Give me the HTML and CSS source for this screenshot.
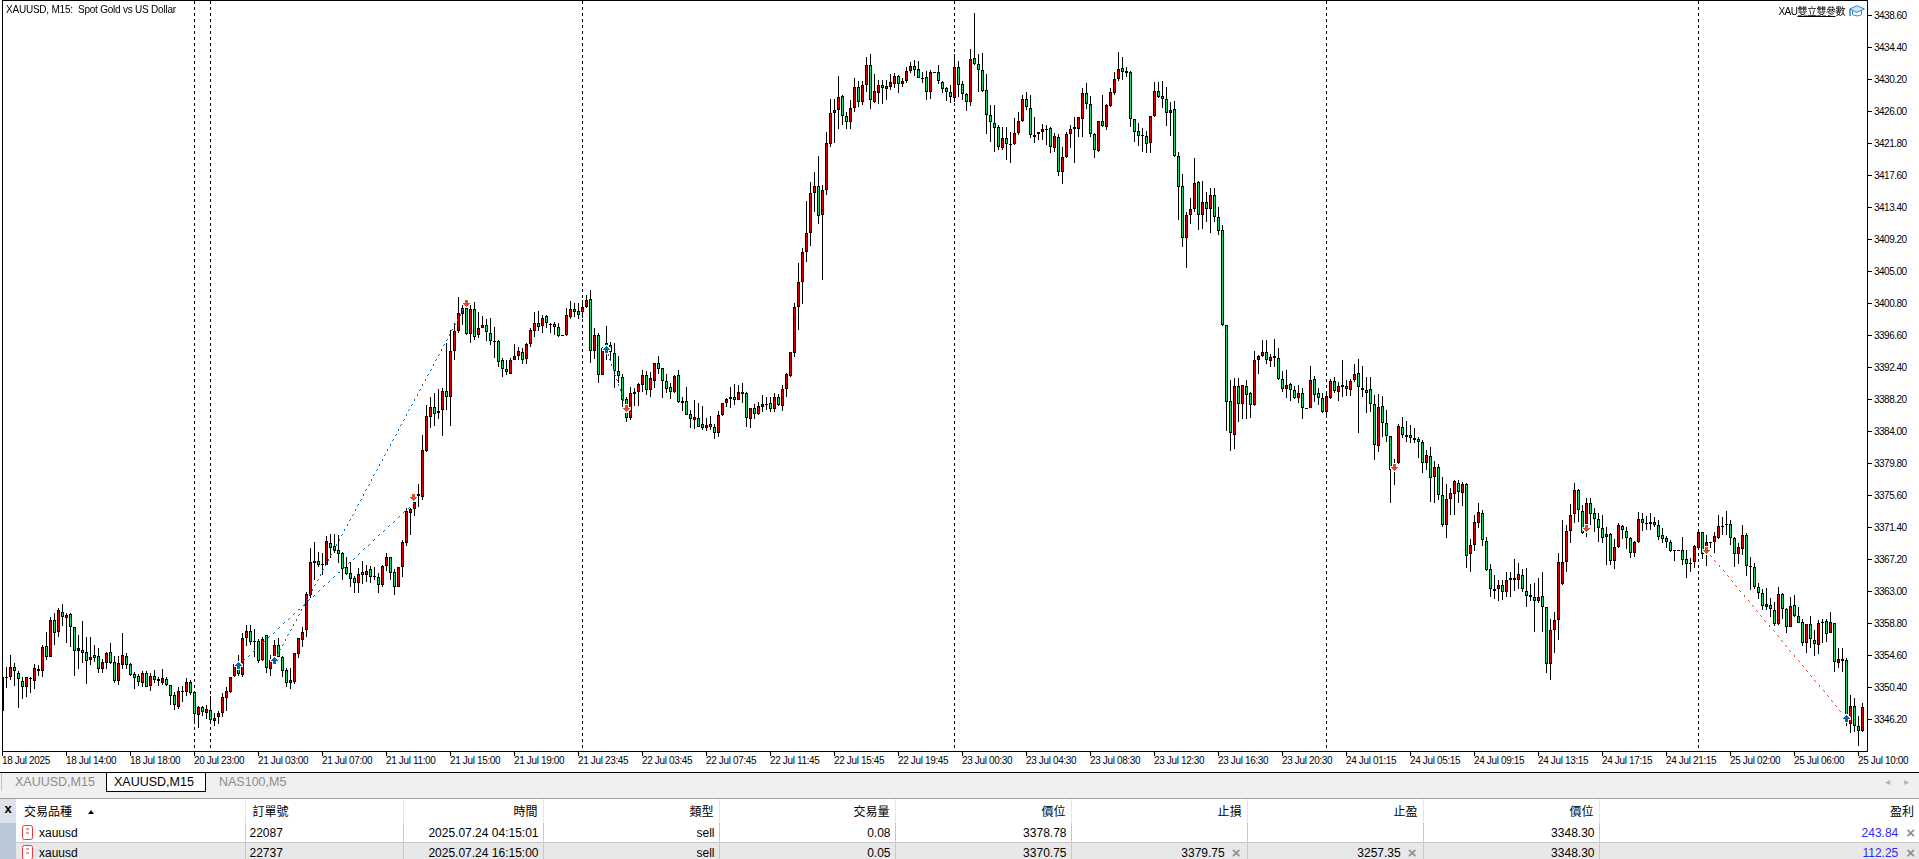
FILE: index.html
```html
<!DOCTYPE html>
<html lang="zh-Hant">
<head>
    <meta charset="UTF-8">
    <title>XAUUSD,M15</title>
    <link rel="stylesheet" href="styles.css">
    <script src="chart.js"></script>
</head>
<body>
<div class="terminal">

    <div class="chart-row">
        <div class="plot">
            <canvas id="idChart" width="1864" height="750"></canvas>
            <div class="chart-title">XAUUSD, M15:  Spot Gold vs US Dollar</div>
            <div class="chart-badge">
                <span class="badge-text">XAU<u>雙立雙參</u>數</span>
                <svg class="cap" width="16" height="13" viewBox="0 0 16 13">
                    <path d="M8 .7 15.4 4 8 7.3 .8 4Z" fill="#cfe6f8" stroke="#1e88d8"/>
                    <path d="M3.5 6v3.6c2.5 1.700 6.500 1.700 9 0V6" fill="none" stroke="#1e88d8"/>
                    <path d="M1 4v7" fill="none" stroke="#1e88d8" stroke-width="1.500"/>
                </svg>
            </div>
        </div>
        <div class="price-axis" id="idPrices"></div>
    </div>
    <div class="time-axis" id="idTimes"></div>

    <div class="tabs">
        <div class="tab">XAUUSD,M15</div>
        <div class="tab active">XAUUSD,M15</div>
        <div class="tab">NAS100,M5</div>
        <div class="tab-nav"><span>&#9666;</span><span>&#9656;</span></div>
    </div>

    <div class="toolbox">
        <div class="strip"><div class="strip-close">x</div></div>
        <table class="grid">
            <colgroup>
                <col class="c-symbol"><col class="c-order"><col class="c-time"><col class="c-wide"><col class="c-wide">
                <col class="c-wide"><col class="c-wide"><col class="c-wide"><col class="c-wide"><col class="c-profit">
            </colgroup>
            <tr>
                <th class="left first">交易品種<i class="sort"></i></th>
                <th class="left">訂單號</th>
                <th>時間</th>
                <th>類型</th>
                <th>交易量</th>
                <th>價位</th>
                <th>止損</th>
                <th>止盈</th>
                <th>價位</th>
                <th>盈利</th>
            </tr>
            <tr>
                <td class="left first">
                    <svg class="pos-icon" width="11" height="15" viewBox="0 0 11 15">
                        <rect x=".5" y=".5" width="10" height="14" rx="2" fill="#fff" stroke="#e5383b"/>
                        <path d="M4 4h3M4 8h3" stroke="#e5383b"/>
                    </svg>xauusd
                </td>
                <td class="left">22087</td>
                <td>2025.07.24 04:15:01</td>
                <td>sell</td>
                <td>0.08</td>
                <td>3378.78</td>
                <td></td>
                <td></td>
                <td>3348.30</td>
                <td class="profit"><span>243.84</span><b>×</b></td>
            </tr>
            <tr class="alt">
                <td class="left first">
                    <svg class="pos-icon" width="11" height="15" viewBox="0 0 11 15">
                        <rect x=".5" y=".5" width="10" height="14" rx="2" fill="#fff" stroke="#e5383b"/>
                        <path d="M4 4h3M4 8h3" stroke="#e5383b"/>
                    </svg>xauusd
                </td>
                <td class="left">22737</td>
                <td>2025.07.24 16:15:00</td>
                <td>sell</td>
                <td>0.05</td>
                <td>3370.75</td>
                <td class="close">3379.75<b>×</b></td>
                <td class="close">3257.35<b>×</b></td>
                <td>3348.30</td>
                <td class="profit"><span>112.25</span><b>×</b></td>
            </tr>
        </table>
    </div>

</div>
</body>
</html>
```
FILE: styles.css
```css
html, body
{
    margin: 0;
    height: 100%;
    overflow: hidden;
    background: #fff;
}
.terminal
{
    display: flex;
    flex-direction: column;
    height: 859px;
    overflow: hidden;
    font-family: "Liberation Sans", "Noto Sans CJK TC", sans-serif;
    color: #000;
}

/* chart */
.chart-row
{
    display: flex;
    height: 752px;
    flex: none;
}
.plot
{
    position: relative;
    margin-left: 2px;
    width: 1864px;
    height: 750px;
    border: 1px solid #000;
    flex: none;
}
.plot canvas
{
    display: block;
}
.chart-title
{
    position: absolute;
    left: 3px;
    top: 2px;
    font-size: 10px;
    letter-spacing: -0.220px;
    line-height: 13px;
    white-space: pre;
}
.chart-badge
{
    position: absolute;
    right: 2px;
    top: 4px;
    display: flex;
    align-items: center;
    gap: 4px;
}
.badge-text
{
    font-size: 10px;
    line-height: 13px;
    letter-spacing: -0.500px;
    white-space: nowrap;
}
.cap
{
    display: block;
}

.price-axis
{
    flex: 1;
    margin-top: -1px;
    font-size: 10px;
    letter-spacing: -0.500px;
}
.price
{
    display: flex;
    align-items: center;
    height: 32px;
    gap: 2px;
}
.price::before
{
    content: "";
    width: 4px;
    height: 1px;
    background: #000;
}

.time-axis
{
    display: flex;
    height: 20px;
    flex: none;
    padding-left: 2px;
    font-size: 10px;
    letter-spacing: -0.350px;
    overflow: hidden;
}
.time
{
    position: relative;
    width: 64px;
    flex: none;
    padding-top: 3px;
    line-height: 12px;
    white-space: nowrap;
}
.time::before
{
    content: "";
    position: absolute;
    left: 0;
    top: 0;
    width: 1px;
    height: 4px;
    background: #000;
}

/* tabs */
.tabs
{
    display: flex;
    height: 25px;
    flex: none;
    border-top: 1px solid #000;
    border-bottom: 1px solid #a0a0a0;
    background: #f0f0f0;
    font-size: 12.500px;
    color: #8c8c8c;
}
.tab
{
    height: 18px;
    padding: 0 13px;
    line-height: 18px;
    white-space: nowrap;
}
.tab:first-child
{
    margin-left: 1px;
    width: 78px;
    border-left: 1px solid #c4c4c4;
}
.tab.active
{
    width: 91px;
    padding: 0 0 0 7px;
    background: #fff;
    color: #000;
    border: 1px solid #000;
    border-top: none;
}
.tab-nav
{
    display: flex;
    gap: 14px;
    margin-left: auto;
    margin-right: 10px;
    font-size: 10px;
    line-height: 18px;
    color: #b4b4b4;
}

/* positions */
.toolbox
{
    display: flex;
    flex: none;
}
.strip
{
    width: 16px;
    flex: none;
    height: 61px;
    background: #b9c9da;
}
.strip-close
{
    height: 24px;
    background: #dce2e9;
    font-size: 13px;
    font-weight: bold;
    line-height: 20px;
    text-align: center;
}
.grid
{
    table-layout: fixed;
    border-collapse: collapse;
    width: 1903px;
    font-size: 12px;
}
.c-symbol { width: 229px; }
.c-order { width: 158px; }
.c-time { width: 140px; }
.c-wide { width: 176px; }
.c-profit { width: 320px; }

.grid th
{
    height: 22px;
    padding: 0 5px 2px 0;
    border-right: 1px solid #e6e6e6;
    font-weight: normal;
    text-align: right;
    white-space: nowrap;
}
.grid td
{
    height: 19px;
    padding: 0 4px 0 0;
    border-right: 1px solid #c8c8c8;
    border-bottom: 1px solid #c8c8c8;
    text-align: right;
    white-space: nowrap;
    overflow: hidden;
}
.grid th.left { text-align: left; padding-left: 7px; }
.grid td.left { text-align: left; padding-left: 4px; }
.grid th.first { padding-left: 8px; }
.grid td.first { padding-left: 6px; }
.grid .alt td
{
    background: #e8e8e8;
}
.grid th:last-child, .grid td:last-child
{
    border-right: none;
}
.sort
{
    display: inline-block;
    margin-left: 16px;
    vertical-align: 2px;
    border-left: 3px solid transparent;
    border-right: 3px solid transparent;
    border-bottom: 4px solid #000;
}
.pos-icon
{
    margin-right: 6px;
    vertical-align: -3px;
}
.grid b
{
    color: #8f8f8f;
    font-size: 15px;
    line-height: 12px;
    vertical-align: -1px;
}
.close b
{
    margin-left: 7px;
    margin-right: 2px;
}
.profit span
{
    color: #2a2aff;
}
.profit b
{
    margin-left: 8px;
}
```
FILE: chart.js
```js
// candles read off the chart: wick top, body top, body bottom, wick bottom, colour
// values are 3x pixels from the row's Y0
var CandleRows=
[
    {Y0:580,Data:"292 292 392 392 k,260 292 293 325 k,225 262 290 300 r,250 262 274 318 g,272 280 298 384 g,292 302 320 356 g,292 292 320 350 r,290 294 298 338 k,252 265 302 328 r,255 268 272 288 k,195 202 272 290 r,155 198 230 240 g,112 120 230 232 r,100 120 158 195 g,85 90 155 172 r,72 96 110 138 g,100 105 113 188 r,98 102 142 200 g,140 142 212 288 g,165 205 212 266 r,122 210 218 250 g,170 217 242 312 g,172 232 240 256 r,195 226 234 245 g,205 228 266 280 g,236 246 266 280 r,215 220 250 268 r,188 217 248 252 g,228 247 302 308 g,228 250 302 316 r,158 226 254 268 r,220 229 254 268 g,248 252 284 288 g,275 283 293 326 g,282 289 305 318 g,272 280 308 320 r,272 280 320 322 g,278 289 318 332 r,270 289 300 310 g,290 296 304 318 k,268 295 308 315 r,290 297 314 318 g,316 316 347 376 g,335 346 374 390 g,320 333 380 386 r,318 333 334 365 k,295 307 337 348 r,300 307 338 345 g,337 337 403 428 g,378 380 406 443 r,378 382 395 408 g,375 388 398 418 r,348 391 421 430 g,400 415 423 438 r,392 400 412 432 r,340 352 400 410 r,320 334 355 392 r,290 290 335 338 r,252 253 288 290 r,225 265 282 288 g,160 175 284 290 r,135 154 174 198 r,135 154 185 196 g,148 183 186 232 k,178 182 242 250 g,170 176 240 242 r,165 166 263 280 g,225 240 266 288 r,180 196 230 248 r,175 196 230 232 g,228 232 274 290 g,264 270 308 320 g,265 300 308 326 r,220 220 305 312 r,175 175 222 234 r,140 157 180 200 r"},
    {Y0:290,Data:"905 913 1020 1040 r,775 817 915 925 r,757 814 818 870 k,785 814 824 830 g,790 822 824 855 k,738 754 824 826 r,732 760 773 805 g,732 768 782 790 g,735 781 791 818 g,785 790 836 870 g,800 832 851 855 g,817 850 868 890 g,858 865 878 910 g,835 851 878 910 r,813 847 856 882 g,825 842 856 875 r,827 838 860 878 g,830 859 861 870 k,850 862 886 908 g,826 829 884 892 r,790 802 829 842 r,802 802 848 870 g,838 846 892 915 g,832 832 892 892 r,750 756 832 860 r,655 664 758 768 r,655 657 668 735 r,633 635 656 678 r,582 613 618 650 k,435 481 620 630 r,346 379 482 485 r,322 352 380 413 r,310 352 371 408 g,297 364 370 388 r,295 304 361 438 r,160 304 320 360 g,120 184 322 408 r,98 122 184 210 r,22 70 122 130 r,40 55 72 105 r,38 55 132 135 g,40 58 132 158 r,37 58 142 150 g,67 113 136 145 r,78 106 113 115 r,87 106 127 152 g"},
    {Y0:280,Data:"115 158 182 195 g,140 182 183 234 k,180 184 245 260 g,235 241 266 290 g,240 268 275 285 g,235 241 281 282 r,193 229 241 240 r,200 214 229 240 r,205 217 240 252 g,188 193 236 252 r,145 151 193 200 r,95 130 152 170 r,93 130 140 153 g,105 114 137 158 r,105 109 130 145 g,128 131 132 158 k,125 133 140 165 g,130 142 167 172 g,166 166 167 167 k,85 106 166 168 r,62 88 110 118 r,68 88 97 112 g,68 94 104 118 g,60 82 97 115 r,45 60 82 84 r,30 58 214 248 g,145 166 214 238 r,158 166 284 310 g,200 205 284 285 r,138 190 215 240 g,185 194 216 240 g,188 218 272 325 g,228 272 288 310 g,282 290 360 385 g,350 358 413 425 g,322 340 413 420 r,325 337 341 378 k,308 312 335 378 r,270 285 314 335 r,273 286 329 345 g,275 295 329 350 r,250 250 302 325 r,228 250 266 282 g,265 265 304 353 g,283 304 326 340 g,310 322 335 358 g,285 289 335 338 r,270 286 365 368 g,350 364 368 392 k,322 364 405 405 g,390 403 418 445 g,360 412 419 448 r,370 415 440 442 g,378 433 445 450 g,415 435 443 452 r,408 433 440 450 g,432 442 458 478 g,392 405 458 470 r,370 370 406 408 r,353 358 370 380 r,322 352 358 385 r,312 352 359 375 g,316 337 359 360 r,310 337 341 370 k,335 340 415 440 g,385 385 418 445 r,372 385 403 418 g,365 379 403 405 r,345 373 380 395 r,350 371 372 390 k,350 370 387 395 g,340 352 388 395 r,342 352 376 378 g,315 328 378 393 r,278 283 328 352 r,215 217 287 292 r,70 82 218 230 r"},
    {Y0:10,Data:"759 816 891 960 r,714 726 816 882 r,572 670 727 757 r,517 550 670 707 r,487 529 550 605 r,438 529 618 643 g,525 541 616 810 r,367 400 541 555 r,267 310 403 410 r,267 301 310 398 r,198 262 301 356 r,255 259 319 345 g,305 319 337 356 g,270 295 337 358 r,203 232 295 305 r,213 232 277 290 g,213 226 275 285 r,142 166 226 245 r,132 166 271 298 g,193 244 275 280 r,210 226 248 282 r,210 226 233 282 g,210 229 236 270 r,193 217 230 240 r,190 199 221 235 r,194 199 223 250 g,205 214 223 232 r,170 184 214 218 r,157 169 184 190 r,150 169 179 198 g,152 178 205 205 g,185 203 204 220 k,183 202 245 270 g,180 187 245 266 r,187 187 188 188 k,165 187 214 222 g,212 217 236 250 g,230 233 247 272 g,225 247 262 278 g,132 172 263 275 r,153 172 226 262 g,214 223 253 270 g,250 253 275 302 g,118 148 275 288 r,10 145 163 165 g,133 163 181 245 g,130 181 242 246 g,193 241 314 372 g,285 316 337 395 g,285 340 355 425 g,345 352 412 420 g,350 385 415 420 r,352 385 403 450 g,365 403 404 460 k,325 370 403 404 r,305 334 370 375 r,255 267 334 335 r,247 267 292 300 g,255 295 376 385 g,322 376 380 398 k,365 366 373 390 r,342 358 367 390 r,345 356 357 405 k,350 354 412 428 g,370 379 413 425 r,372 382 485 497 g,410 442 485 523 r,367 373 442 443 r,345 358 373 415 r,320 351 356 458 k,320 322 356 380 r,235 250 328 380 r,220 250 282 298 g,258 283 373 380 g,370 373 421 445 g,333 333 422 425 r,255 334 347 350 g,283 286 350 360 r,235 247 287 290 r,187 208 250 256 r,126 176 208 212 r,140 175 187 210 g,170 183 188 200 k,183 186 328 352 g,328 328 365 395 g,340 364 379 408 g,355 376 377 425 k,362 379 401 430 g,318 319 398 430 r,215 244 317 322 r,215 244 260 265 g,212 259 266 295 g,230 267 310 347 g,275 301 310 378 r,273 298 439 440 g,427 439 532 630 g,492 529 685 710 g,605 615 685 773 r,565 598 616 642 r,445 520 598 605 r,513 516 616 660 g,513 577 616 657 r,545 577 598 635 g,535 556 598 668 r,535 556 620 635 g,590 620 664 675 g"},
    {Y0:40,Data:"555 571 854 858 g,856 856 1087 1172 g,1020 1084 1180 1232 g,1015 1039 1184 1228 r,1015 1039 1093 1145 g,1035 1036 1093 1137 r,1020 1039 1066 1137 g,1055 1060 1096 1133 g,933 961 1094 1098 r,945 949 961 1002 r,900 937 947 950 r,900 937 961 972 g,942 952 964 980 r,897 949 955 982 g,925 955 1018 1020 g,993 1018 1048 1055 g,990 1036 1048 1075 r,1028 1033 1051 1082 g,1038 1051 1075 1076 g,1035 1060 1075 1090 r,1045 1060 1105 1136 g,1105 1105 1106 1106 k,978 1021 1105 1105 r,1008 1018 1066 1085 g,1045 1060 1075 1095 g,1060 1075 1115 1118 g,1062 1069 1115 1130 r,1018 1024 1073 1078 r,1012 1024 1054 1060 g,1025 1039 1055 1082 r,960 1036 1040 1070 k,1020 1039 1048 1068 g,1018 1024 1051 1068 r,972 1003 1021 1025 r,957 1000 1042 1178 g,978 1045 1051 1070 g,1012 1051 1058 1118 g,1012 1048 1093 1115 g,1065 1093 1214 1260 g,1062 1102 1217 1235 r,1068 1099 1150 1192 g,1110 1150 1187 1205 g,1187 1187 1291 1389 g,1258 1270 1292 1335 k,1152 1159 1268 1272 r,1132 1162 1184 1195 g,1143 1186 1191 1205 k,1155 1186 1193 1208 g,1163 1195 1199 1210 k,1190 1198 1207 1253 g,1200 1207 1268 1298 g,1230 1246 1268 1290 r"},
    {Y0:460,Data:"-40 -12 55 125 g,3 20 52 130 r,12 22 106 120 g,50 106 195 200 g,72 118 196 233 r,85 100 118 165 r,60 64 102 165 r,60 68 95 130 g,65 73 100 138 r,68 73 287 325 g,238 256 283 335 r,165 187 256 272 r,130 157 190 205 r,150 160 241 258 g,232 244 329 332 g,312 328 388 410 g,345 388 394 418 r,360 376 388 422 r,360 376 397 420 g,337 361 397 412 r,335 355 361 410 r,297 355 361 392 g,310 343 361 388 r,328 344 386 395 g,323 392 409 440 g,372 406 412 422 g,370 412 424 515 g,355 410 424 430 r,336 409 442 515 g,440 442 613 638 g,477 511 613 660 r,457 481 511 578 r,278 307 481 540 r,180 307 373 375 r,195 214 307 335 r,133 166 214 248 r,70 91 163 190 r,87 91 151 185 g,135 154 218 222 g,115 130 193 230 r,115 130 163 195 g,145 160 176 215 g,160 176 205 245 g,165 205 235 248 g,200 223 232 315 r,218 223 302 315 g,237 260 302 326 r,190 196 260 265 r,195 199 211 238 g,200 214 235 268 g,230 235 280 295 g,243 247 280 290 r,155 176 247 248 r,160 176 190 212 g,168 190 193 210 k,158 187 193 210 r,172 187 196 202 g,180 194 230 240 g,205 226 238 248 g,228 235 245 263 g,240 245 272 275 g"},
    {Y0:500,Data:"151 151 152 182 k,151 151 152 152 k,112 151 181 195 g,150 178 193 233 g,175 189 193 215 r,135 139 187 203 r,95 97 145 150 r,95 97 163 177 g,105 127 140 197 r,125 127 128 145 k,95 109 127 158 r,45 79 113 117 r,50 79 80 105 k,33 73 74 105 k,60 71 115 135 g,110 115 163 200 g,130 142 163 192 r,75 106 146 165 r,100 106 199 228 g,172 199 200 270 k,190 202 260 268 g,250 262 278 298 g,268 280 319 330 g,265 313 321 330 r,295 316 328 350 g,305 331 373 378 g,262 283 373 375 r,278 283 328 358 g,325 328 380 398 g,290 319 380 380 r,285 316 349 352 g,320 349 370 370 g,358 367 430 438 g,372 373 430 458 r,349 373 418 445 g,390 421 433 467 g,360 370 436 463 r,358 367 370 430 k,358 364 403 425 g,337 367 400 400 r,370 370 487 515 g,445 478 490 505 r,445 478 482 515 k,475 481 670 678 g,585 619 673 700 r,595 619 679 695 g,648 679 694 738 g,610 622 694 695 r"}
];

var Periods=[194,210,582,954,1326,1698];

var TradeLines=
[
    {X1:238,Y1:665,X2:413,Y2:503,Color:"#0a6ebd"},
    {X1:274,Y1:660,X2:466,Y2:303,Color:"#0a6ebd"},
    {X1:606,Y1:349,X2:626,Y2:408,Color:"#0a6ebd"},
    {X1:1706,Y1:550,X2:1846,Y2:718,Color:"#e8492a"}
];

var Markers=
[
    {X:238,Y:665,Up:1},{X:274,Y:660,Up:1},{X:606,Y:349,Up:1},{X:1846,Y:718,Up:1},
    {X:413,Y:497,Up:0},{X:466,Y:303,Up:0},{X:626,Y:408,Up:0},{X:1394,Y:467,Up:0},
    {X:1586,Y:528,Up:0},{X:1706,Y:550,Up:0}
];

var PriceLabels=[];
for(var p=0;p<23;p++)
    PriceLabels.push((3438.6-p*4.2).toFixed(2));

var TimeLabels=["18 Jul 2025","18 Jul 14:00","18 Jul 18:00","20 Jul 23:00","21 Jul 03:00","21 Jul 07:00","21 Jul 11:00","21 Jul 15:00","21 Jul 19:00","21 Jul 23:45","22 Jul 03:45","22 Jul 07:45","22 Jul 11:45","22 Jul 15:45","22 Jul 19:45","23 Jul 00:30","23 Jul 04:30","23 Jul 08:30","23 Jul 12:30","23 Jul 16:30","23 Jul 20:30","24 Jul 01:15","24 Jul 05:15","24 Jul 09:15","24 Jul 13:15","24 Jul 17:15","24 Jul 21:15","25 Jul 02:00","25 Jul 06:00","25 Jul 10:00"];

function FillAxis(Id,Arr,ClassName)
{
    var Box=document.getElementById(Id);
    for(var i=0;i<Arr.length;i++)
    {
        var Item=document.createElement("div");
        Item.className=ClassName;
        Item.textContent=Arr[i];
        Box.appendChild(Item);
    }
}

function DrawCandle(ctx,X,Y0,Item)
{
    var Top=Math.round(Y0+Item[0]/3);
    var Open=Math.round(Y0+Item[1]/3);
    var Close=Math.round(Y0+Item[2]/3);
    var Low=Math.round(Y0+Item[3]/3);
    if(Close<=Open)
        Close=Open+1;
    if(Low<Close)
        Low=Close;

    ctx.fillStyle="#000";
    ctx.fillRect(X,Top,1,Low-Top);
    ctx.fillRect(X-1,Open,3,Close-Open);
    if(Close-Open>2 && Item[4]!="k")
    {
        ctx.fillStyle=Item[4]=="g"?"#00e676":"#e60000";
        ctx.fillRect(X,Open+1,1,Close-Open-2);
    }
}

// hard pixels, 2 on and 3 off, like the terminal's dotted trend lines
function DrawDotLine(ctx,Line)
{
    var Steps=Math.max(Math.abs(Line.X2-Line.X1),Math.abs(Line.Y2-Line.Y1));
    ctx.fillStyle=Line.Color;
    for(var i=0;i<=Steps;i++)
    {
        if(i%5>1)
            continue;
        var X=Math.round(Line.X1+(Line.X2-Line.X1)*i/Steps);
        var Y=Math.round(Line.Y1+(Line.Y2-Line.Y1)*i/Steps);
        ctx.fillRect(X,Y,1,1);
    }
}

function DrawMarker(ctx,Item)
{
    var Rows=[1,3,5,7,3,3,3];
    var Color=Item.Up?"#0a63ad":"#e2492b";
    for(var Pass=0;Pass<2;Pass++)
    {
        ctx.fillStyle=Pass?Color:"#fff";
        for(var i=0;i<Rows.length;i++)
        {
            var W=Rows[i];
            var Y=Item.Up?Item.Y-3+i:Item.Y+3-i;
            if(Pass)
                ctx.fillRect(Item.X-(W-1)/2,Y,W,1);
            else
                ctx.fillRect(Item.X-(W-1)/2-1,Y-1,W+2,3);
        }
    }
}

function DrawChart()
{
    var ctx=document.getElementById("idChart").getContext("2d");
    // canvas starts at page pixel 3,1
    ctx.translate(-3,-1);

    ctx.fillStyle="#000";
    for(var n=0;n<Periods.length;n++)
        for(var y=1;y<751;y+=6)
            ctx.fillRect(Periods[n],y,1,3);

    var Index=0;
    for(var r=0;r<CandleRows.length;r++)
    {
        var Arr=CandleRows[r].Data.split(",");
        for(var i=0;i<Arr.length;i++)
        {
            DrawCandle(ctx,2+4*Index,CandleRows[r].Y0,Arr[i].split(" ").map(function (V)
            {
                return isNaN(V)?V:+V;
            }));
            Index++;
        }
    }

    for(var t=0;t<TradeLines.length;t++)
        DrawDotLine(ctx,TradeLines[t]);

    for(var m=0;m<Markers.length;m++)
        DrawMarker(ctx,Markers[m]);
}

window.onload=function()
{
    FillAxis("idPrices",PriceLabels,"price");
    FillAxis("idTimes",TimeLabels,"time");
    DrawChart();
};
```
